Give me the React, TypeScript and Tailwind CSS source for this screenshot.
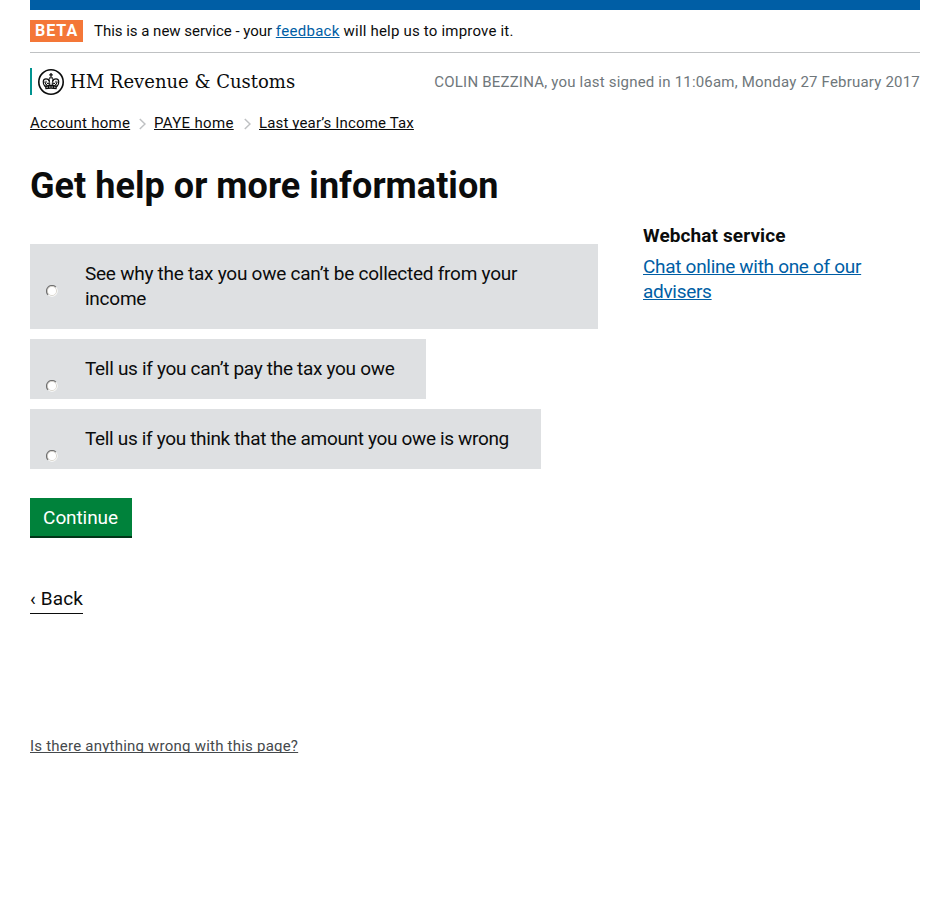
import React from "react";

function Crest() {
  return (
    <svg width="26" height="26" viewBox="0 0 26 26" fill="none" stroke="#0b0c0c" className="ml-1.5 shrink-0">
      <circle cx="13" cy="13" r="12.2" strokeWidth="1.6" />
      <path d="M13 4v4.5M11.2 5.8h3.6" strokeWidth="1.3" />
      <path d="M7 17.5C4.4 14.5 4.6 9.8 8 9.8c1.8 0 3 1 3.2 2.7M19 17.5c2.6-3 2.4-7.7-1-7.7-1.8 0-3 1-3.2 2.7" strokeWidth="1.2" />
      <path d="M11.3 9.2c-.6 2.5.5 3 .5 6.6M14.7 9.2c.6 2.5-.5 3-.5 6.6M11 8.9h4" strokeWidth="1" />
      <path d="M6.6 12.7l1.6 3.2 2-2.2 1.2 2.2M19.4 12.7l-1.6 3.2-2-2.2-1.2 2.2M8 11.8v2M18 11.8v2" strokeWidth="1" />
      <path d="M6.9 16.4q6.1-1.3 12.2 0l-.5 3.8q-5.6-1-11.2 0z" fill="#0b0c0c" stroke="none" />
      <path d="M8.5 18.4q4.5-.8 9 0" stroke="#fff" strokeWidth=".8" strokeDasharray="1.5 1" />
    </svg>
  );
}

function Chevron() {
  return (
    <svg width="7" height="12" viewBox="0 0 7 12" fill="none" stroke="#bfc1c3" strokeWidth="1.5" className="mt-[4px] shrink-0">
      <path d="M.8 1L6 6 .8 11" />
    </svg>
  );
}

function Radio() {
  return (
    <svg width="12" height="12" viewBox="0 0 12 12" className="mt-[41px] shrink-0">
      <circle cx="6" cy="6" r="5.7" fill="#fff" />
      <circle cx="6" cy="6" r="4.6" fill="none" stroke="#d4d0c8" strokeWidth=".8" />
      <path d="M2.1 9.9A5.4 5.4 0 0 1 9.9 2.1" fill="none" stroke="#707070" strokeWidth="1.2" />
    </svg>
  );
}

function Option({ className, children }: { className: string; children: React.ReactNode }) {
  return (
    <label className={`flex bg-[#dee0e2] pl-4 ${className}`}>
      <Radio />
      <span className="ml-[27px] pt-[17px] pb-[18px]">{children}</span>
    </label>
  );
}

const crumb = "underline decoration-1 underline-offset-1 [text-decoration-skip-ink:none]";
const blueLink = "text-[#005ea5] underline decoration-1 underline-offset-1 [text-decoration-skip-ink:none]";

export default function App() {
  return (
    <div className="h-[909px] overflow-hidden bg-white px-[30px] font-['Roboto',sans-serif] text-[#0b0c0c] whitespace-nowrap">
      <div className="h-2.5 bg-[#005ea5]" />
      <div className="flex h-[43px] items-start border-b border-[#bfc1c3] pt-2.5">
        <strong className="h-[22px] w-[53px] bg-[#f47738] pl-[5px] text-[16px] leading-[22px] font-bold tracking-[1px] text-white">BETA</strong>
        <span className="ml-[11px] text-[15px] leading-[22px] tracking-[0.2px]">
          <span className="tracking-[-0.02px]">This is a new service - your </span>
          <a className={`${blueLink} tracking-[0.3px]`}>feedback</a> will help us to improve it.
        </span>
      </div>
      <header className="mt-[15px] flex h-[27px] items-center justify-between">
        <div className="flex h-[27px] items-center border-l-2 border-[#009390]">
          <Crest />
          <span className="ml-1.5 font-['DejaVu_Serif',serif] text-[18px] leading-[27px]">HM Revenue &amp; Customs</span>
        </div>
        <span className="mt-[3px] self-start text-[15px] leading-[22px] tracking-[0.2px] text-[#6f777b]">COLIN BEZZINA, you last signed in 11:06am, Monday 27 February 2017</span>
      </header>
      <nav className="mt-[18px] flex h-5 text-[15px] leading-5">
        <a className={`${crumb} w-[100px] tracking-[0.25px]`}>Account home</a>
        <span className="w-6 pl-[9px] pt-px"><Chevron /></span>
        <a className={`${crumb} w-20 tracking-[0.33px]`}>PAYE home</a>
        <span className="w-[25px] pl-[10px] pt-px"><Chevron /></span>
        <a className={`${crumb} h-[17px] overflow-hidden tracking-[0.15px]`}>Last year’s Income Tax</a>
      </nav>
      <main className="mt-[33px]">
        <h1 className="h-10 text-[36px] leading-10 font-bold tracking-[0.04px]">Get help or more information</h1>
        <div className="flex">
          <div className="mt-[38px] flex w-[613px] flex-col gap-2.5 text-[19px] leading-[25px]">
            <Option className="w-[568px] tracking-[-0.25px]">See why the tax you owe can’t be collected from your<br />income</Option>
            <Option className="w-[396px] tracking-[-0.31px]">Tell us if you can’t pay the tax you owe</Option>
            <Option className="w-[511px] tracking-[-0.34px]">Tell us if you think that the amount you owe is wrong</Option>
          </div>
          <aside className="mt-[17px] text-[19px] leading-[25px]">
            <h2 className="mb-1.5 text-[19px] leading-[25px] font-bold tracking-[0.1px]">Webchat service</h2>
            <a className={`${blueLink} tracking-[-0.3px]`}>Chat online with one of our<br />advisers</a>
          </aside>
        </div>
        <button className="mt-[29px] block h-10 w-[102px] border-b-2 border-[#003618] bg-[#00823b] pt-px pr-px text-[19px] leading-[37px] tracking-[-0.1px] text-white">Continue</button>
        <a className="mt-[48px] block h-7 w-[53px] border-b border-[#0b0c0c] text-[19px] leading-[25px] tracking-[0.15px]">‹ Back</a>
      </main>
      <a className="mt-[122px] block h-[17px] overflow-hidden text-[15px] leading-5 tracking-[0.225px] text-[#45494c] underline decoration-1 underline-offset-1 [text-decoration-skip-ink:none]">Is there anything wrong with this page?</a>
    </div>
  );
}
